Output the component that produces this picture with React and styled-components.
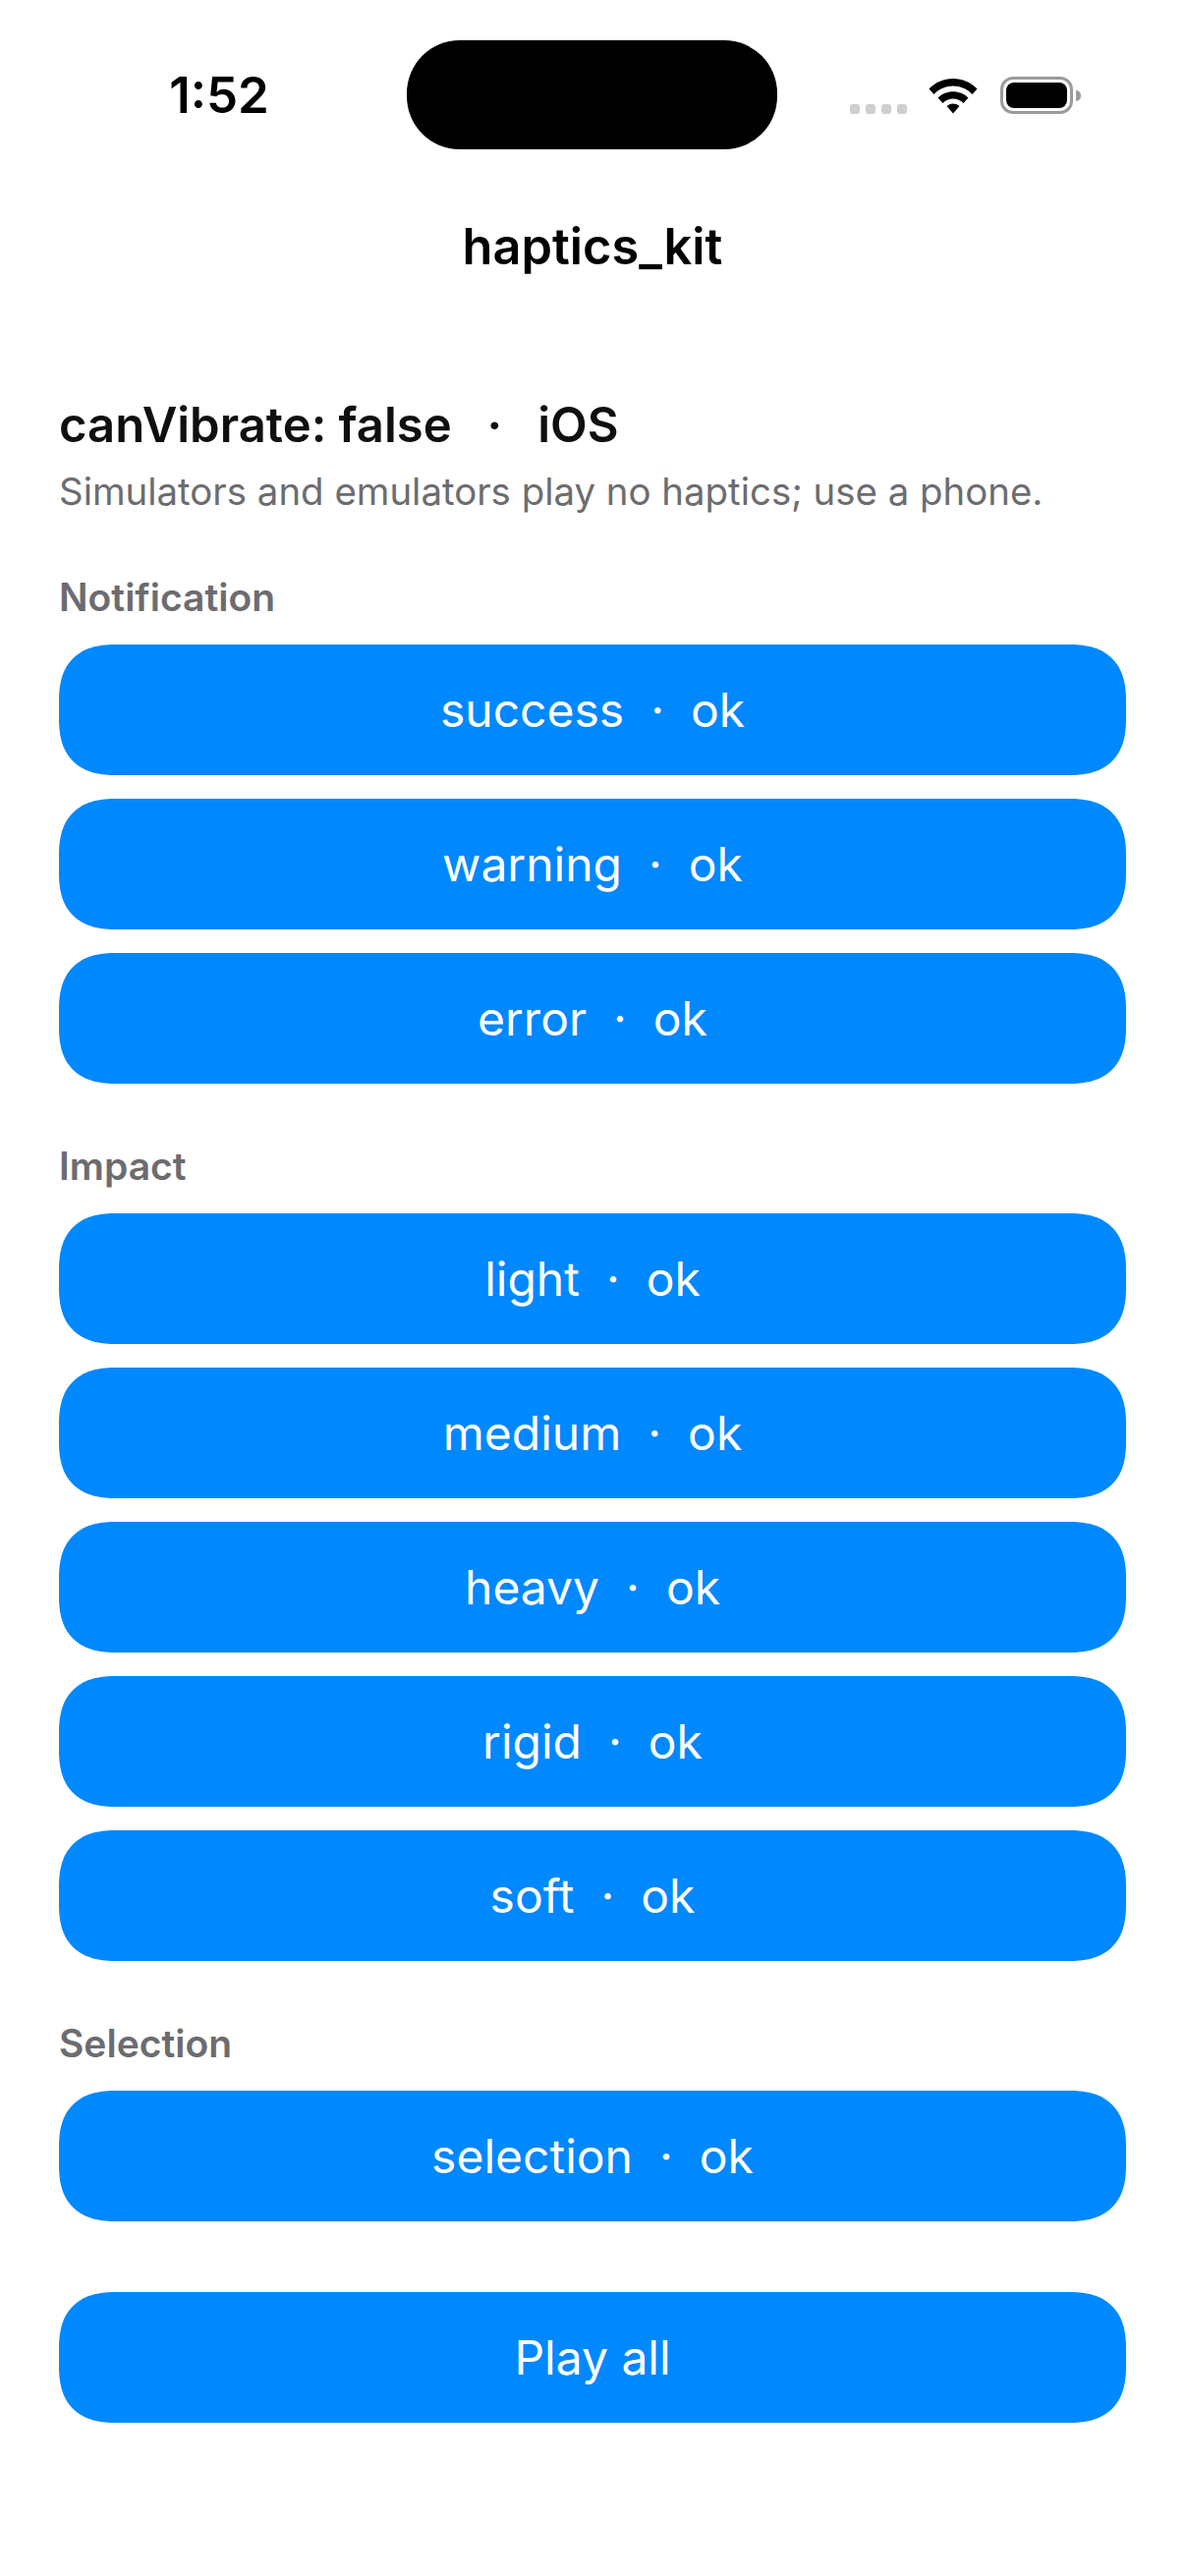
import styled, { createGlobalStyle } from 'styled-components';

const GlobalStyle = createGlobalStyle`
    html, body {
        margin: 0;
        padding: 0;
        background: #fff;
    }
    * {
        box-sizing: border-box;
    }
`;

const groups = [
    { title: 'Notification', items: ['success', 'warning', 'error'] },
    { title: 'Impact', items: ['light', 'medium', 'heavy', 'rigid', 'soft'] },
    { title: 'Selection', items: ['selection'] },
];

export default function App() {
    return (
        <Page>
            <GlobalStyle />
            <StatusBar>
                <Time>1:52</Time>
                <Island />
                <StatusIcons>
                    <Signal>
                        <Dot />
                        <Dot />
                        <Dot />
                        <Dot />
                    </Signal>
                    <svg width="50" height="38" viewBox="0 0 50 38">
                        <path d="M0.5 12.5C13.5 -1.5 36.5 -1.5 49.5 12.5L44.5 18C34 6.5 16 6.5 5.5 18Z" fill="#000" />
                        <path d="M9.5 21.5C17.5 13 32.5 13 40.5 21.5L35.5 27C30 21 20 21 14.5 27Z" fill="#000" />
                        <path d="M18.5 30C22 26.5 28 26.5 31.5 30L25 37.5Z" fill="#000" />
                    </svg>
                    <Battery>
                        <BatteryShell>
                            <BatteryFill />
                        </BatteryShell>
                        <BatteryCap />
                    </Battery>
                </StatusIcons>
            </StatusBar>
            <Title>haptics_kit</Title>
            <Content>
                <Heading>
                    canVibrate: false<HeadingDot>·</HeadingDot>iOS
                </Heading>
                <Hint>Simulators and emulators play no haptics; use a phone.</Hint>
                {groups.map((group) => (
                    <Group key={group.title}>
                        <Label>{group.title}</Label>
                        {group.items.map((item) => (
                            <Button key={item}>{item}&nbsp; · &nbsp;ok</Button>
                        ))}
                    </Group>
                ))}
                <PlayAll>Play all</PlayAll>
            </Content>
        </Page>
    );
}

const Page = styled.div`
    width: 1206px;
    height: 2622px;
    background: #fff;
    color: #000;
    font-family: Inter, "Liberation Sans", sans-serif;
    overflow: hidden;
`;
const StatusBar = styled.div`
    height: 152px;
    padding-top: 41px;
    display: flex;
    align-items: flex-start;
`;
const Time = styled.div`
    width: 414px;
    padding-top: 32px;
    padding-left: 32px;
    text-align: center;
    font-size: 51px;
    line-height: 48px;
    font-weight: 600;
`;
const Island = styled.div`
    width: 377px;
    height: 111px;
    background: #000;
    border-radius: 54px;
`;
const StatusIcons = styled.div`
    display: flex;
    align-items: flex-end;
    margin-left: 74px;
    margin-top: 37px;
    gap: 22px;
`;
const Signal = styled.div`
    display: flex;
    gap: 6px;
`;
const Dot = styled.span`
    width: 10px;
    height: 10px;
    border-radius: 3px;
    background: #cfcfcf;
`;
const Battery = styled.div`
    display: flex;
    align-items: center;
    gap: 3px;
    margin-left: 1px;
`;
const BatteryShell = styled.div`
    width: 74px;
    height: 38px;
    border: 3px solid #9b9b9b;
    border-radius: 13px;
    padding: 3px;
`;
const BatteryFill = styled.div`
    height: 100%;
    background: #000;
    border-radius: 8px;
`;
const BatteryCap = styled.div`
    width: 5px;
    height: 11px;
    background: #9b9b9b;
    border-radius: 0 5px 5px 0;
`;
const Title = styled.div`
    margin-top: 51px;
    text-align: center;
    font-size: 50.5px;
    line-height: 96px;
    font-weight: 600;
`;
const Content = styled.div`
    padding: 104px 60px 0;
`;
const Heading = styled.div`
    display: flex;
    font-size: 49px;
    line-height: 60px;
    font-weight: 600;
    color: #0f0f0f;
`;
const HeadingDot = styled.span`
    margin: 0 36px;
`;
const Hint = styled.div`
    font-size: 38.4px;
    line-height: 48px;
    color: #6c6c70;
    margin-top: 13px;
`;
const Group = styled.div`
    margin-top: 60px;
    display: flex;
    flex-direction: column;
    gap: 24px;
`;
const Label = styled.div`
    font-size: 39px;
    line-height: 48px;
    font-weight: 600;
    color: #6c6c70;
`;
const Button = styled.div`
    height: 133px;
    border-radius: 48px;
    background: #0088ff;
    color: #fff;
    font-size: 48px;
    display: flex;
    align-items: center;
    justify-content: center;
    @supports (corner-shape: squircle) {
        border-radius: 58px;
        corner-shape: superellipse(1.3);
    }
`;
const PlayAll = styled(Button)`
    margin-top: 72px;
`;
